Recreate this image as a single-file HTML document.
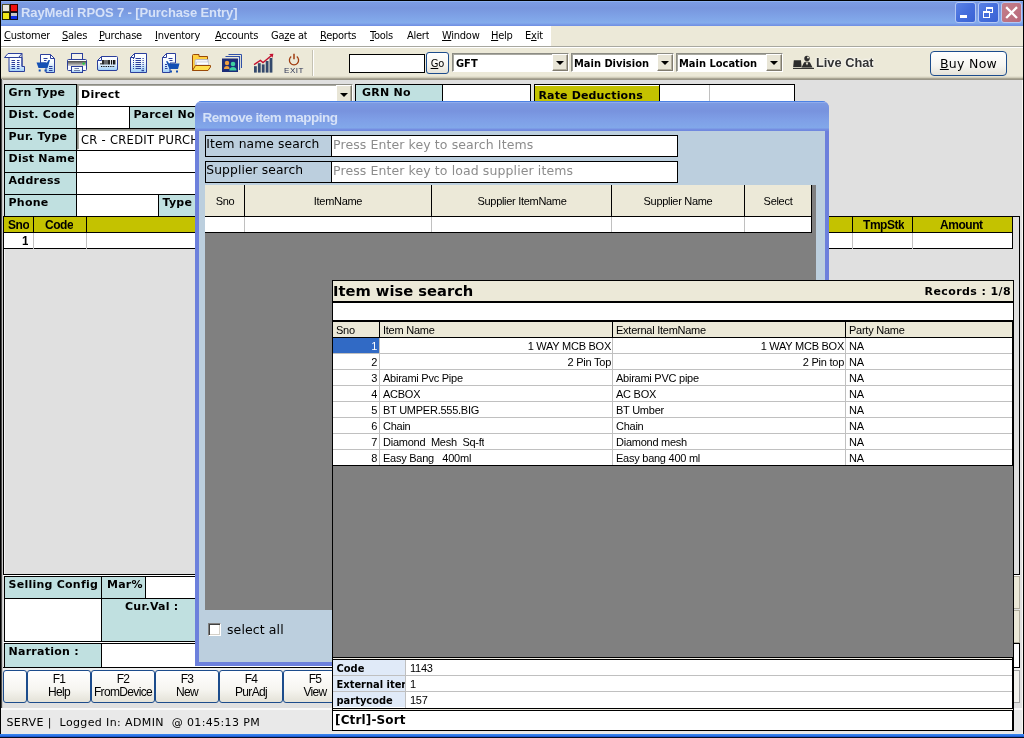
<!DOCTYPE html><html><head><meta charset="utf-8"><title>RayMedi RPOS 7 - [Purchase Entry]</title><style>
*{margin:0;padding:0;box-sizing:border-box}
html,body{width:1024px;height:738px;overflow:hidden;background:#E0E0E0}
body{position:relative;font-family:"Liberation Sans",sans-serif;font-size:11px;color:#000}
.a{position:absolute;white-space:pre;overflow:hidden}
#root{position:absolute;left:0;top:0;width:1024px;height:738px;overflow:hidden;will-change:transform}
.vb{font-family:"DejaVu Sans","Liberation Sans",sans-serif;font-weight:bold;font-size:11px;letter-spacing:.25px}
.v{font-family:"DejaVu Sans","Liberation Sans",sans-serif;font-weight:normal}
.tb{font-family:"DejaVu Sans Condensed","DejaVu Sans","Liberation Sans",sans-serif;font-weight:bold;font-size:11px}
.t{font-family:"DejaVu Sans Condensed","DejaVu Sans","Liberation Sans",sans-serif;font-weight:normal;font-size:11px}
.gb{font-family:"Liberation Sans",sans-serif;font-weight:bold;font-size:12px;letter-spacing:-.45px}
.ms{font-family:"Liberation Sans",sans-serif;font-size:11px;letter-spacing:-.25px}
.lbl{background:#C0E0E0;border:1px solid #000}
.inp{background:#fff;border:1px solid #000}
.yl{background:#C4C200;border:1px solid #000}
u{text-decoration:underline;text-underline-offset:1px}
.xpbtn{border:1px solid #1C4C8C;border-radius:3px;background:linear-gradient(#fff 0%,#F6F5F0 60%,#E4E2D8 100%);text-align:center}
.combo{background:#fff;border:1px solid;border-color:#8C8C84 #fff #fff #8C8C84;box-shadow:inset 1px 1px 0 #A8A8A0}
.cbtn{position:absolute;right:0;top:0;bottom:0;width:16px;background:#E8E5D6;border:1px solid;border-color:#fff #807C70 #807C70 #fff;box-shadow:inset -1px -1px 0 #B4B0A0}
.cbtn:after{content:"";position:absolute;left:3px;top:calc(50% - 2px);border:4px solid transparent;border-top:4px solid #000;border-bottom:0}
</style></head><body><div id="root">
<div class="a " style="left:0px;top:0px;width:1024px;height:26px;background:linear-gradient(#000 0,#000 1px,#8CB0F0 1px,#8CB0F0 2px,#7C9CE4 2px,#7896DE 8px,#7EA2E6 16px,#84ACEC 23px,#7C9EE8 24px,#6E8EE2 26px)"></div>
<div class="a " style="left:2px;top:4px;width:8px;height:8px;background:#E8E8E0;border:1px solid #50502a"></div>
<div class="a " style="left:10px;top:4px;width:8px;height:8px;background:#F01010;border:1px solid #300"></div>
<div class="a " style="left:2px;top:12px;width:8px;height:8px;background:#F0E818;border:1px solid #220"></div>
<div class="a " style="left:10px;top:12px;width:8px;height:8px;background:linear-gradient(#C8C8C8 50%,#1030E8 50%);border:1px solid #112"></div>
<div class="a " style="left:21px;top:5px;font-weight:bold;font-size:13px;color:#D6E2F8;letter-spacing:-.12px;line-height:15px">RayMedi RPOS 7 - [Purchase Entry]</div>
<div class="a" style="left:955px;top:2px;width:21px;height:21px;border:1px solid #B4C8F4;border-radius:3px;background:linear-gradient(135deg,#5A82E6 0%,#456EDC 50%,#3A62D4 100%)"><div class="a" style="left:4px;top:12px;width:7px;height:3px;background:#fff"></div></div>
<div class="a" style="left:978px;top:2px;width:21px;height:21px;border:1px solid #B4C8F4;border-radius:3px;background:linear-gradient(135deg,#5A82E6 0%,#456EDC 50%,#3A62D4 100%)"><div class="a" style="left:7px;top:4px;width:7px;height:6px;border:1px solid #fff;border-top-width:2px"></div><div class="a" style="left:4px;top:8px;width:7px;height:7px;border:1px solid #fff;border-top-width:2px;background:#456EDC"></div></div>
<div class="a" style="left:1001px;top:2px;width:21px;height:21px;border:1px solid #B4C8F4;border-radius:3px;background:linear-gradient(135deg,#C4808C,#B8687A)"><svg class="a" style="left:0;top:0" width="19" height="19" viewBox="0 0 19 19"><path d="M5 5L14.2 14.2M14.2 5L5 14.2" stroke="#fff" stroke-width="2.3" stroke-linecap="square"/></svg></div>
<div class="a " style="left:0px;top:26px;width:1024px;height:20px;background:#ECE9D8"></div>
<div class="a " style="left:1px;top:26px;width:550px;height:20px;background:#fff"></div>
<div class="a t" style="left:4px;top:29px;line-height:14px;letter-spacing:-.25px"><u>C</u>ustomer</div>
<div class="a t" style="left:62px;top:29px;line-height:14px;letter-spacing:-.25px"><u>S</u>ales</div>
<div class="a t" style="left:99px;top:29px;line-height:14px;letter-spacing:-.25px"><u>P</u>urchase</div>
<div class="a t" style="left:155px;top:29px;line-height:14px;letter-spacing:-.25px"><u>I</u>nventory</div>
<div class="a t" style="left:215px;top:29px;line-height:14px;letter-spacing:-.25px"><u>A</u>ccounts</div>
<div class="a t" style="left:271px;top:29px;line-height:14px;letter-spacing:-.25px">Ga<u>z</u>e at</div>
<div class="a t" style="left:320px;top:29px;line-height:14px;letter-spacing:-.25px"><u>R</u>eports</div>
<div class="a t" style="left:370px;top:29px;line-height:14px;letter-spacing:-.25px"><u>T</u>ools</div>
<div class="a t" style="left:407px;top:29px;line-height:14px;letter-spacing:-.25px">Alert</div>
<div class="a t" style="left:442px;top:29px;line-height:14px;letter-spacing:-.25px"><u>W</u>indow</div>
<div class="a t" style="left:491px;top:29px;line-height:14px;letter-spacing:-.25px"><u>H</u>elp</div>
<div class="a t" style="left:525px;top:29px;line-height:14px;letter-spacing:-.25px">E<u>x</u>it</div>
<div class="a " style="left:0px;top:46px;width:1024px;height:34px;background:#ECE9D8;border-top:1px solid #A8A8A0;box-shadow:inset 0 1px 0 #fff"></div>
<div class="a " style="left:0px;top:76px;width:1024px;height:4px;background:linear-gradient(#ECE9D8,#C8C4B0 50%,#8C8878 75%,#A8A498)"></div>
<svg class="a" style="left:3px;top:52px" width="24" height="22" viewBox="0 0 24 22"><defs><linearGradient id="gb" x1="0" y1="0" x2="0" y2="1"><stop offset="0" stop-color="#fff"/><stop offset=".45" stop-color="#F4FAFF"/><stop offset="1" stop-color="#9CCEF8"/></linearGradient><linearGradient id="gp" x1="0" y1="0" x2="0" y2="1"><stop offset="0" stop-color="#4A4A4A"/><stop offset="1" stop-color="#D8D8D8"/></linearGradient></defs><path d="M6 5.5 H19 V14.5 H21.5 V19.5 H6 Z" fill="url(#gb)" stroke="#2B3F9C" stroke-width="1"/><path d="M1.5 5.5 L5 1.5 H19 L15.5 5.5 Z" fill="#F4F8FF" stroke="#2B3F9C" stroke-width="1" stroke-linejoin="round"/><path d="M19 1.5 V14.5" stroke="#2B3F9C" stroke-width="1" fill="none"/><path d="M8.5 8.5H12M14 8.5H16.5" stroke="#2B3F9C" stroke-width="1"/><path d="M8.5 10.5H12M14 10.5H16.5" stroke="#2B3F9C" stroke-width="1"/><path d="M8.5 12.5H12M14 12.5H16.5" stroke="#2B3F9C" stroke-width="1"/><path d="M8.5 14.5H12M14 14.5H16.5" stroke="#2B3F9C" stroke-width="1"/><path d="M8.5 16.5H12M14 16.5H16.5" stroke="#2B3F9C" stroke-width="1"/></svg>
<svg class="a" style="left:35px;top:52px" width="22" height="22" viewBox="0 0 22 22"><path d="M5.5 2.5 H15.5 L19.5 6.5 V20.5 H11 V11 H5.5 Z" fill="url(#gb)" stroke="#2B3F9C" stroke-width="1" stroke-linejoin="round"/><path d="M15.5 2.5 V6.5 H19.5" fill="none" stroke="#2B3F9C" stroke-width="1"/><path d="M8.5 6.5H12.5M9 8.5H11.5M14 14.5H17.5M14 16.5H17.5M14 18.5H17.5" stroke="#2B3F9C" stroke-width="1"/><path d="M1.5 10.5 H12.0 L13.5 8.0 H15.0 L12.5 16.0 H3.5 Z" fill="#1450B4"/><rect x="3.7" y="17.5" width="2" height="2" fill="#1450B4"/><rect x="9.5" y="17.5" width="2" height="2" fill="#1450B4"/></svg>
<svg class="a" style="left:66px;top:52px" width="22" height="22" viewBox="0 0 22 22"><rect x="5.5" y="1.5" width="11" height="7" fill="#F4F2EA" stroke="#2B3F9C"/><rect x="1.5" y="7.5" width="19" height="11" rx="1" fill="#F8FAFF" stroke="#2B3F9C"/><rect x="2" y="9" width="18" height="5" fill="url(#gp)"/><circle cx="17.6" cy="11.6" r="1.2" fill="#20D040"/><rect x="5.5" y="14.5" width="11" height="6" fill="url(#gb)" stroke="#2B3F9C"/><path d="M8.5 16.5H13M8 18.5H14" stroke="#7080A8" stroke-width="1"/></svg>
<svg class="a" style="left:96px;top:55px" width="23" height="17" viewBox="0 0 23 17"><path d="M5.5 1.5 H20.5 Q21.5 1.5 21.5 2.5 V14 Q21.5 15.5 20 15.5 H3 Q1.5 15.5 1.5 14 V5.5 Z" fill="url(#gb)" stroke="#2B3F9C" stroke-linejoin="round"/><path d="M5.5 1.5 V5.5 H1.5" fill="none" stroke="#2B3F9C"/><path d="M5 8V9.5M6.7 5V9.5M8 5V9.5M10 5V9.5M12 5V9.5M13.3 5V9.5M15.5 5V9.5M17.5 5V9.5M18.8 5V9.5" stroke="#101010" stroke-width="1.2"/><path d="M5 11.5H19" stroke="#101010" stroke-width="1" stroke-dasharray="1.3 1"/></svg>
<svg class="a" style="left:129px;top:52px" width="19" height="22" viewBox="0 0 19 22"><path d="M5.5 1.5 H17.5 V20.5 H1.5 V5.5 Z" fill="url(#gb)" stroke="#2B3F9C" stroke-linejoin="round"/><path d="M5.5 1.5 V5.5 H1.5" fill="none" stroke="#2B3F9C"/><path d="M4 6.5H5M6.5 6.5H12M13.5 6.5H14.7" stroke="#2B3F9C" stroke-width="1"/><path d="M4 8.5H5M6.5 8.5H12M13.5 8.5H14.7" stroke="#2B3F9C" stroke-width="1"/><path d="M4 10.5H5M6.5 10.5H12M13.5 10.5H14.7" stroke="#2B3F9C" stroke-width="1"/><path d="M4 12.5H5M6.5 12.5H12M13.5 12.5H14.7" stroke="#2B3F9C" stroke-width="1"/><path d="M4 14.5H5M6.5 14.5H12M13.5 14.5H14.7" stroke="#2B3F9C" stroke-width="1"/><path d="M4 16.5H5M6.5 16.5H12M13.5 16.5H14.7" stroke="#2B3F9C" stroke-width="1"/><path d="M12.5 18.5H15" stroke="#2B3F9C" stroke-width="1.4"/></svg>
<svg class="a" style="left:161px;top:52px" width="20" height="22" viewBox="0 0 20 22"><path d="M5.5 1.5 H14.5 V11 H9 V20.5 H1.5 V5.5 Z" fill="url(#gb)" stroke="#2B3F9C" stroke-linejoin="round"/><path d="M5.5 1.5 V5.5 H1.5" fill="none" stroke="#2B3F9C"/><path d="M7.5 6.5H11.5M8.5 8.5H11.5M4 12.5H6M4 14.5H6M4 16.5H6.5" stroke="#2B3F9C" stroke-width="1"/><path d="M18.5 11.5 H8.0 L6.7 9.3 H5.0 L8.5 17.0 H17.0 Z" fill="#1450B4"/><rect x="9.0" y="18.5" width="2" height="2" fill="#1450B4"/><rect x="15.0" y="18.5" width="2" height="2" fill="#1450B4"/></svg>
<svg class="a" style="left:191px;top:53px" width="22" height="19" viewBox="0 0 22 19"><path d="M1.5 17.5 V2.5 Q1.5 1.5 2.5 1.5 H8 V3.5 H16.5 V12" fill="#FFD040" stroke="#9A4A08" stroke-linejoin="round"/><path d="M4 12 V7.5 Q4 6.5 5.5 6.5 H17 V12Z" fill="#F4F4FA" stroke="#A8B0C8" stroke-width=".8"/><path d="M5.5 12 V9 H17.5 V12Z" fill="#fff" stroke="#B8C0D0" stroke-width=".6"/><path d="M1.5 17.5 L4.5 12.5 H19.5 V14 L17 17.5 Z" fill="#FFE050" stroke="#9A4A08" stroke-linejoin="round"/></svg>
<svg class="a" style="left:221px;top:53px" width="22" height="20" viewBox="0 0 22 20"><path d="M7.5 1.5 H20.5 V15" fill="none" stroke="#3050A8" stroke-width="1"/><path d="M4.5 3.5 H18.5 V17" fill="none" stroke="#3050A8" stroke-width="1.2"/><rect x="16.6" y="4.6" width="1" height="12" fill="#E8ECF8"/><rect x="1" y="5.5" width="16" height="13.5" fill="#1C2C78"/><circle cx="6" cy="10" r="2.2" fill="#F0A040"/><path d="M3 16 Q3 13 6 13 Q8.5 13 8.5 16Z" fill="#F0A040"/><circle cx="12" cy="11" r="2.3" fill="#3CD0A0"/><path d="M8.2 17.5 Q8.5 14 12 14 Q15.5 14 15.5 17.5Z" fill="#3CD0A0"/></svg>
<svg class="a" style="left:252px;top:52px" width="23" height="22" viewBox="0 0 23 22"><rect x="2" y="14.2" width="2.8" height="6.400000000000002" fill="#34496C"/><rect x="5.9" y="11.2" width="2.8" height="9.400000000000002" fill="#34496C"/><rect x="9.8" y="12.4" width="2.8" height="8.200000000000001" fill="#34496C"/><rect x="13.7" y="9" width="2.8" height="11.600000000000001" fill="#34496C"/><rect x="17.6" y="6" width="2.8" height="14.600000000000001" fill="#34496C"/><path d="M2 12.6 L8.4 8.4 L11 10.6 L19.5 3.4" fill="none" stroke="#C41230" stroke-width="1.3"/><path d="M17.2 2 L21.4 1.8 L20.6 5.8 Z" fill="#C41230"/></svg>
<svg class="a" style="left:282px;top:52px" width="24" height="22" viewBox="0 0 24 22"><path d="M9.2 4.6 A4.6 4.6 0 1 0 14.8 4.6" fill="none" stroke="#A03C10" stroke-width="1.3"/><path d="M12 1.8 V7.2" stroke="#A03C10" stroke-width="1.5"/><text x="12" y="20.6" text-anchor="middle" font-family="Liberation Sans, sans-serif" font-size="8" fill="#2C3454" letter-spacing=".55">EXIT</text></svg>
<div class="a " style="left:312px;top:50px;width:1px;height:26px;background:#C5C2B2"></div>
<div class="a " style="left:313px;top:50px;width:1px;height:26px;background:#fff"></div>
<div class="a inp" style="left:349px;top:54px;width:76px;height:19px;"></div>
<div class="a xpbtn t" style="left:426px;top:52px;width:23px;height:22px;line-height:22px;font-size:11px"><u>G</u>o</div>
<div class="a combo tb" style="left:452px;top:53px;width:117px;height:19px;padding:3px 0 0 3px;line-height:13px">GFT<div class="cbtn"></div></div>
<div class="a combo tb" style="left:571px;top:53px;width:103px;height:19px;padding:3px 0 0 2px;line-height:13px">Main Division<div class="cbtn"></div></div>
<div class="a combo tb" style="left:676px;top:53px;width:107px;height:19px;padding:3px 0 0 2px;line-height:13px">Main Location<div class="cbtn"></div></div>
<svg class="a" style="left:792px;top:55px" width="23" height="15" viewBox="0 0 23 15"><path d="M1.8 5.2 H9 L9.6 12 H1.2 Z" fill="#2C2C2C"/><path d="M1 13.4 H22" stroke="#2C2C2C" stroke-width="1.1"/><circle cx="15" cy="3.4" r="2.7" fill="#2C2C2C"/><circle cx="16" cy="2.6" r="1" fill="#ECE9D8"/><path d="M9.5 12.5 L12 7.5 Q15 5.5 18 7.5 L20.5 12.5 Z" fill="#2C2C2C"/><path d="M13.6 7.6 L15 10.6 L16.4 7.6Z" fill="#ECE9D8"/></svg>
<div class="a " style="left:816px;top:55px;font-weight:bold;font-size:12.8px;color:#333;line-height:16px;text-shadow:0 0 2px #fff,0 0 3px #fff;overflow:visible">Live Chat</div>
<div class="a xpbtn v" style="left:930px;top:51px;width:77px;height:25px;line-height:23px;font-size:12.5px;border-radius:4px;letter-spacing:.3px"><u>B</u>uy Now</div>
<div class="a " style="left:0px;top:0px;width:1px;height:738px;background:#000"></div>
<div class="a " style="left:1px;top:79px;width:1px;height:630px;background:#484848"></div>
<div class="a " style="left:2px;top:79px;width:1px;height:630px;background:#C8C8C8"></div>
<div class="a " style="left:1022px;top:80px;width:1px;height:654px;background:#F6F6F2"></div>
<div class="a " style="left:1023px;top:0px;width:1px;height:738px;background:#000"></div>
<div class="a lbl vb" style="left:4px;top:84px;width:73px;height:23px;padding:1px 0 0 3.5px;line-height:14px">Grn Type</div>
<div class="a lbl vb" style="left:4px;top:106px;width:73px;height:23px;padding:1px 0 0 3.5px;line-height:14px">Dist. Code</div>
<div class="a inp" style="left:76px;top:106px;width:278px;height:23px;"></div>
<div class="a lbl vb" style="left:4px;top:128px;width:73px;height:23px;padding:1px 0 0 3.5px;line-height:14px">Pur. Type</div>
<div class="a " style="left:76px;top:128px;width:278px;height:1px;background:#000"></div>
<div class="a lbl vb" style="left:4px;top:150px;width:73px;height:23px;padding:1px 0 0 3.5px;line-height:14px">Dist Name</div>
<div class="a inp" style="left:76px;top:150px;width:278px;height:23px;"></div>
<div class="a lbl vb" style="left:4px;top:172px;width:73px;height:23px;padding:1px 0 0 3.5px;line-height:14px">Address</div>
<div class="a inp" style="left:76px;top:172px;width:278px;height:23px;"></div>
<div class="a lbl vb" style="left:4px;top:194px;width:73px;height:23px;padding:1px 0 0 3.5px;line-height:14px">Phone</div>
<div class="a inp" style="left:76px;top:194px;width:278px;height:23px;"></div>
<div class="a combo vb" style="left:77px;top:84px;width:276px;height:22px;padding:3px 0 0 3px;line-height:14px;font-weight:bold">Direct<div class="cbtn"></div></div>
<div class="a lbl vb" style="left:129px;top:106px;width:70px;height:23px;padding:1px 0 0 3.5px;line-height:14px">Parcel No</div>
<div class="a combo v" style="left:77px;top:129px;width:276px;height:21px;padding:3px 0 0 3px;line-height:14px;font-size:11.5px;letter-spacing:.3px">CR - CREDIT PURCHASE</div>
<div class="a lbl vb" style="left:158px;top:194px;width:60px;height:23px;padding:1px 0 0 3.5px;line-height:14px">Type</div>
<div class="a lbl vb" style="left:355px;top:84px;width:88px;height:23px;padding:1px 0 0 6px;line-height:14px">GRN No</div>
<div class="a inp" style="left:442px;top:84px;width:89px;height:23px;"></div>
<div class="a inp" style="left:534px;top:84px;width:261px;height:30px;"></div>
<div class="a vb" style="left:535px;top:86px;width:125px;height:28px;background:#C4C200;padding:3px 0 0 3.5px;line-height:14px;letter-spacing:.15px">Rate Deductions</div>
<div class="a " style="left:659px;top:85px;width:1px;height:28px;background:#000"></div>
<div class="a " style="left:709px;top:85px;width:1px;height:28px;background:#C0C0C0"></div>
<div class="a " style="left:3px;top:216px;width:1017px;height:359px;background:#E0E0E0;border:1px solid #000"></div>
<div class="a " style="left:4px;top:249px;width:1px;height:325px;background:#F4F4F4"></div>
<div class="a " style="left:4px;top:217px;width:1009px;height:32px;background:#fff;border-right:1px solid #000;border-bottom:1px solid #000"></div>
<div class="a " style="left:4px;top:217px;width:1008px;height:16px;background:#C4C200;border-bottom:1px solid #000"></div>
<div class="a " style="left:33px;top:217px;width:1px;height:16px;background:#000"></div>
<div class="a " style="left:33px;top:233px;width:1px;height:16px;background:#C0C0C0"></div>
<div class="a " style="left:86px;top:217px;width:1px;height:16px;background:#000"></div>
<div class="a " style="left:86px;top:233px;width:1px;height:16px;background:#C0C0C0"></div>
<div class="a " style="left:852px;top:217px;width:1px;height:16px;background:#000"></div>
<div class="a " style="left:852px;top:233px;width:1px;height:16px;background:#C0C0C0"></div>
<div class="a " style="left:912px;top:217px;width:1px;height:16px;background:#000"></div>
<div class="a " style="left:912px;top:233px;width:1px;height:16px;background:#C0C0C0"></div>
<div class="a gb" style="left:8px;top:218px;font-size:12px;line-height:14px">Sno</div>
<div class="a gb" style="left:45px;top:218px;font-size:12px;line-height:14px">Code</div>
<div class="a gb" style="left:863px;top:218px;font-size:12px;line-height:14px">TmpStk</div>
<div class="a gb" style="left:940px;top:218px;font-size:12px;line-height:14px">Amount</div>
<div class="a gb" style="left:22px;top:234px;font-size:12px;line-height:14px">1</div>
<div class="a " style="left:3px;top:575px;width:1017px;height:1px;background:#fff"></div>
<div class="a lbl vb" style="left:4px;top:576px;width:98px;height:23px;padding:1px 0 0 3.5px;line-height:14px">Selling Config</div>
<div class="a lbl vb" style="left:101px;top:576px;width:45px;height:23px;padding:1px 0 0 5px;line-height:14px">Mar%</div>
<div class="a inp" style="left:145px;top:576px;width:60px;height:23px;"></div>
<div class="a inp" style="left:4px;top:598px;width:98px;height:44px;"></div>
<div class="a lbl vb" style="left:101px;top:598px;width:104px;height:44px;padding:1px 0 0 23px;line-height:14px">Cur.Val :</div>
<div class="a lbl vb" style="left:4px;top:643px;width:98px;height:25px;padding:1px 0 0 3.5px;line-height:14px">Narration :</div>
<div class="a inp" style="left:101px;top:643px;width:300px;height:25px;"></div>
<div class="a " style="left:3px;top:642px;width:200px;height:1px;background:#fff"></div>
<div class="a " style="left:3px;top:667px;width:1017px;height:1px;background:#000"></div>
<div class="a " style="left:205px;top:666px;width:815px;height:1px;background:#fff"></div>
<div class="a " style="left:3px;top:668px;width:1017px;height:2px;background:#F0F0F0"></div>
<div class="a xpbtn" style="left:3px;top:670px;width:24px;height:33px;"></div>
<div class="a xpbtn ms" style="left:27px;top:670px;width:64px;height:33px;font-size:12px;line-height:13px;padding-top:2px;letter-spacing:-.65px">F1<br>Help</div>
<div class="a xpbtn ms" style="left:91px;top:670px;width:64px;height:33px;font-size:12px;line-height:13px;padding-top:2px;letter-spacing:-.65px">F2<br>FromDevice</div>
<div class="a xpbtn ms" style="left:155px;top:670px;width:64px;height:33px;font-size:12px;line-height:13px;padding-top:2px;letter-spacing:-.65px">F3<br>New</div>
<div class="a xpbtn ms" style="left:219px;top:670px;width:64px;height:33px;font-size:12px;line-height:13px;padding-top:2px;letter-spacing:-.65px">F4<br>PurAdj</div>
<div class="a xpbtn ms" style="left:283px;top:670px;width:64px;height:33px;font-size:12px;line-height:13px;padding-top:2px;letter-spacing:-.65px">F5<br>View</div>
<div class="a " style="left:1px;top:708px;width:1021px;height:2px;background:#F8F8F8"></div>
<div class="a " style="left:1px;top:710px;width:1021px;height:24px;background:#E9E9E9"></div>
<div class="a v" style="left:6.5px;top:715.6px;font-size:11px;letter-spacing:.38px;line-height:14px">SERVE |  Logged In: ADMIN  @ 01:45:13 PM</div>
<div class="a " style="left:0px;top:734px;width:1024px;height:4px;background:linear-gradient(#3C88F0 0,#2870E4 2px,#1848C0 3px,#081848 3px,#000 4px)"></div>
<div class="a " style="left:1014px;top:576px;width:6px;height:33px;background:#ECE9D8;border:1px solid #B0AC9C;border-left:0"></div>
<div class="a " style="left:1014px;top:610px;width:6px;height:33px;background:#ECE9D8;border:1px solid #B0AC9C;border-left:0"></div>
<div class="a " style="left:1014px;top:643px;width:6px;height:25px;background:#fff;border:1px solid #000;border-left:0"></div>
<div class="a " style="left:1014px;top:670px;width:6px;height:33px;background:#F4F3EE;border:1px solid #A0A0A0;border-left:0"></div>
<div class="a" style="left:195px;top:101px;width:634px;height:565px;background:#6C80DC;border-radius:7px 7px 0 0;overflow:hidden">
<div class="a" style="left:0;top:0;width:634px;height:30px;background:linear-gradient(#4C82E4 0,#4C82E4 1px,#90ACEC 1px,#90ACEC 2px,#7C9AE2 2px,#7893DE 10px,#7E9EE6 18px,#82A8EA 27px,#7690E2 28px,#6E86DE 30px)"></div>
<div class="a" style="left:7.5px;top:9px;font-weight:bold;font-size:13.5px;color:#D6E2F8;line-height:15px;letter-spacing:-.47px">Remove item mapping</div>
<div class="a" style="left:4px;top:30px;width:626px;height:531px;background:#BCCFDE"></div>
</div>
<div class="a v" style="left:205px;top:135px;width:127px;height:22px;background:#BCCFDE;border:1px solid #000;font-size:12.3px;line-height:15px;padding:1px 0 0 .3px;letter-spacing:.1px">Item name search</div>
<div class="a inp v" style="left:331px;top:135px;width:347px;height:22px;font-size:12.5px;line-height:15px;padding:1px 0 0 1px;color:#8C8C8C;letter-spacing:.1px">Press Enter key to search Items</div>
<div class="a v" style="left:205px;top:161px;width:127px;height:22px;background:#BCCFDE;border:1px solid #000;font-size:12.3px;line-height:15px;padding:1px 0 0 .3px;letter-spacing:.1px">Supplier search</div>
<div class="a inp v" style="left:331px;top:161px;width:347px;height:22px;font-size:12.5px;line-height:15px;padding:1px 0 0 1px;color:#8C8C8C;letter-spacing:.1px">Press Enter key to load supplier items</div>
<div class="a " style="left:205px;top:185px;width:611px;height:425px;background:#808080"></div>
<div class="a " style="left:205px;top:185px;width:607px;height:32px;background:#ECE9D8;border-bottom:1px solid #000;border-right:1px solid #000"></div>
<div class="a " style="left:205px;top:217px;width:607px;height:16px;background:#fff;border-bottom:1px solid #000;border-right:1px solid #000"></div>
<div class="a " style="left:244px;top:185px;width:1px;height:32px;background:#000"></div>
<div class="a " style="left:244px;top:217px;width:1px;height:15px;background:#C0C0C0"></div>
<div class="a " style="left:431px;top:185px;width:1px;height:32px;background:#000"></div>
<div class="a " style="left:431px;top:217px;width:1px;height:15px;background:#C0C0C0"></div>
<div class="a " style="left:611px;top:185px;width:1px;height:32px;background:#000"></div>
<div class="a " style="left:611px;top:217px;width:1px;height:15px;background:#C0C0C0"></div>
<div class="a " style="left:744px;top:185px;width:1px;height:32px;background:#000"></div>
<div class="a " style="left:744px;top:217px;width:1px;height:15px;background:#C0C0C0"></div>
<div class="a ms" style="left:165px;top:194px;width:120px;text-align:center;font-size:11px;line-height:14px;letter-spacing:-.3px">Sno</div>
<div class="a ms" style="left:278px;top:194px;width:120px;text-align:center;font-size:11px;line-height:14px;letter-spacing:-.3px">ItemName</div>
<div class="a ms" style="left:462px;top:194px;width:120px;text-align:center;font-size:11px;line-height:14px;letter-spacing:-.3px">Supplier ItemName</div>
<div class="a ms" style="left:618px;top:194px;width:120px;text-align:center;font-size:11px;line-height:14px;letter-spacing:-.3px">Supplier Name</div>
<div class="a ms" style="left:718px;top:194px;width:120px;text-align:center;font-size:11px;line-height:14px;letter-spacing:-.3px">Select</div>
<div class="a " style="left:208px;top:623px;width:13px;height:13px;background:#fff;border:1px solid;border-color:#808080 #fff #fff #808080;box-shadow:inset 1px 1px 0 #404040,inset -1px -1px 0 #D4D0C8"></div>
<div class="a v" style="left:227px;top:622px;font-size:12.5px;line-height:16px;letter-spacing:.1px">select all</div>
<div class="a " style="left:332px;top:280px;width:682px;height:451px;background:#808080;border:1px solid #000"></div>
<div class="a " style="left:333px;top:281px;width:680px;height:22px;background:#ECE9D8;border-bottom:2px solid #000"></div>
<div class="a vb" style="left:333px;top:282px;font-size:14.7px;line-height:18px;letter-spacing:0">Item wise search</div>
<div class="a vb" style="left:890px;top:285px;width:121px;text-align:right;line-height:14px;letter-spacing:.4px">Records : 1/8</div>
<div class="a " style="left:333px;top:303px;width:680px;height:19px;background:#fff;border-bottom:2px solid #000"></div>
<div class="a " style="left:333px;top:322px;width:680px;height:16px;background:#ECE9D8;border-bottom:1px solid #000"></div>
<div class="a " style="left:379px;top:322px;width:1px;height:16px;background:#000"></div>
<div class="a " style="left:612px;top:322px;width:1px;height:16px;background:#000"></div>
<div class="a " style="left:845px;top:322px;width:1px;height:16px;background:#000"></div>
<div class="a ms" style="left:336px;top:323px;line-height:14px">Sno</div>
<div class="a ms" style="left:383px;top:323px;line-height:14px">Item Name</div>
<div class="a ms" style="left:616px;top:323px;line-height:14px">External ItemName</div>
<div class="a ms" style="left:849px;top:323px;line-height:14px">Party Name</div>
<div class="a " style="left:333px;top:338px;width:680px;height:128px;background:#fff"></div>
<div class="a " style="left:333px;top:353px;width:680px;height:1px;background:#C0C0C0"></div>
<div class="a " style="left:333px;top:338px;width:46px;height:15px;background:#316AC5"></div>
<div class="a ms" style="left:333px;top:339px;width:44px;text-align:right;line-height:14px;color:#fff">1</div>
<div class="a ms" style="left:381px;top:339px;width:230px;text-align:right;line-height:14px">1 WAY MCB BOX</div>
<div class="a ms" style="left:614px;top:339px;width:230px;text-align:right;line-height:14px">1 WAY MCB BOX</div>
<div class="a ms" style="left:849px;top:339px;line-height:14px">NA</div>
<div class="a " style="left:333px;top:369px;width:680px;height:1px;background:#C0C0C0"></div>
<div class="a ms" style="left:333px;top:355px;width:44px;text-align:right;line-height:14px">2</div>
<div class="a ms" style="left:381px;top:355px;width:230px;text-align:right;line-height:14px">2 Pin Top</div>
<div class="a ms" style="left:614px;top:355px;width:230px;text-align:right;line-height:14px">2 Pin top</div>
<div class="a ms" style="left:849px;top:355px;line-height:14px">NA</div>
<div class="a " style="left:333px;top:385px;width:680px;height:1px;background:#C0C0C0"></div>
<div class="a ms" style="left:333px;top:371px;width:44px;text-align:right;line-height:14px">3</div>
<div class="a ms" style="left:383px;top:371px;line-height:14px">Abirami Pvc Pipe</div>
<div class="a ms" style="left:616px;top:371px;line-height:14px">Abirami PVC pipe</div>
<div class="a ms" style="left:849px;top:371px;line-height:14px">NA</div>
<div class="a " style="left:333px;top:401px;width:680px;height:1px;background:#C0C0C0"></div>
<div class="a ms" style="left:333px;top:387px;width:44px;text-align:right;line-height:14px">4</div>
<div class="a ms" style="left:383px;top:387px;line-height:14px">ACBOX</div>
<div class="a ms" style="left:616px;top:387px;line-height:14px">AC BOX</div>
<div class="a ms" style="left:849px;top:387px;line-height:14px">NA</div>
<div class="a " style="left:333px;top:417px;width:680px;height:1px;background:#C0C0C0"></div>
<div class="a ms" style="left:333px;top:403px;width:44px;text-align:right;line-height:14px">5</div>
<div class="a ms" style="left:383px;top:403px;line-height:14px">BT UMPER.555.BIG</div>
<div class="a ms" style="left:616px;top:403px;line-height:14px">BT Umber</div>
<div class="a ms" style="left:849px;top:403px;line-height:14px">NA</div>
<div class="a " style="left:333px;top:433px;width:680px;height:1px;background:#C0C0C0"></div>
<div class="a ms" style="left:333px;top:419px;width:44px;text-align:right;line-height:14px">6</div>
<div class="a ms" style="left:383px;top:419px;line-height:14px">Chain</div>
<div class="a ms" style="left:616px;top:419px;line-height:14px">Chain</div>
<div class="a ms" style="left:849px;top:419px;line-height:14px">NA</div>
<div class="a " style="left:333px;top:449px;width:680px;height:1px;background:#C0C0C0"></div>
<div class="a ms" style="left:333px;top:435px;width:44px;text-align:right;line-height:14px">7</div>
<div class="a ms" style="left:383px;top:435px;line-height:14px">Diamond  Mesh  Sq-ft</div>
<div class="a ms" style="left:616px;top:435px;line-height:14px">Diamond mesh</div>
<div class="a ms" style="left:849px;top:435px;line-height:14px">NA</div>
<div class="a " style="left:333px;top:465px;width:680px;height:1px;background:#C0C0C0"></div>
<div class="a ms" style="left:333px;top:451px;width:44px;text-align:right;line-height:14px">8</div>
<div class="a ms" style="left:383px;top:451px;line-height:14px">Easy Bang   400ml</div>
<div class="a ms" style="left:616px;top:451px;line-height:14px">Easy bang 400 ml</div>
<div class="a ms" style="left:849px;top:451px;line-height:14px">NA</div>
<div class="a " style="left:379px;top:338px;width:1px;height:128px;background:#C0C0C0"></div>
<div class="a " style="left:612px;top:338px;width:1px;height:128px;background:#C0C0C0"></div>
<div class="a " style="left:845px;top:338px;width:1px;height:128px;background:#C0C0C0"></div>
<div class="a " style="left:333px;top:465px;width:680px;height:1px;background:#000"></div>
<div class="a " style="left:1012px;top:322px;width:2px;height:144px;background:#000"></div>
<div class="a " style="left:333px;top:657px;width:680px;height:1px;background:#000"></div>
<div class="a " style="left:333px;top:658px;width:680px;height:1px;background:#F0EDE4"></div>
<div class="a " style="left:333px;top:659px;width:680px;height:1px;background:#000"></div>
<div class="a " style="left:333px;top:660px;width:680px;height:48px;background:#fff"></div>
<div class="a " style="left:333px;top:708px;width:680px;height:1px;background:#000"></div>
<div class="a " style="left:333px;top:660px;width:72px;height:15px;background:#E0EAF8"></div>
<div class="a tb" style="left:336.5px;top:660.5px;width:68.5px;line-height:16px">Code</div>
<div class="a ms" style="left:410px;top:660px;line-height:16px">1143</div>
<div class="a " style="left:333px;top:675px;width:680px;height:1px;background:#C0C0C0"></div>
<div class="a " style="left:333px;top:676px;width:72px;height:15px;background:#E0EAF8"></div>
<div class="a tb" style="left:336.5px;top:676.5px;width:68.5px;line-height:16px">External iter</div>
<div class="a ms" style="left:410px;top:676px;line-height:16px">1</div>
<div class="a " style="left:333px;top:691px;width:680px;height:1px;background:#C0C0C0"></div>
<div class="a " style="left:333px;top:692px;width:72px;height:15px;background:#E0EAF8"></div>
<div class="a tb" style="left:336.5px;top:692.5px;width:68.5px;line-height:16px">partycode</div>
<div class="a ms" style="left:410px;top:692px;line-height:16px">157</div>
<div class="a " style="left:405px;top:660px;width:1px;height:48px;background:#C0C0C0"></div>
<div class="a " style="left:333px;top:709px;width:680px;height:1px;background:#F0EDE4"></div>
<div class="a " style="left:333px;top:710px;width:680px;height:21px;background:#fff;border:1px solid #000;border-left:0"></div>
<div class="a vb" style="left:335px;top:713px;font-size:12px;line-height:15px;letter-spacing:.15px">[Ctrl]-Sort</div>
<div class="a " style="left:1012px;top:657px;width:2px;height:52px;background:#000"></div>
</div></body></html>
